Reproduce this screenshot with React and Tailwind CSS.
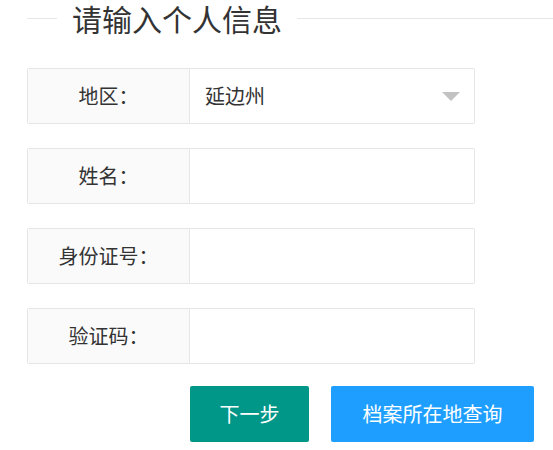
export default function App() {
  const rows = [
    { label: "地区：", value: "延边州", select: true },
    { label: "姓名：" },
    { label: "身份证号：" },
    { label: "验证码：" },
  ];
  return (
    <div
      className="w-[553px] h-[450px] overflow-hidden bg-white pl-[27px] text-[#333]"
      style={{ fontFamily: '"Noto Sans CJK SC", "Noto Sans", sans-serif' }}
    >
      {/* fieldset style heading */}
      <div className="flex items-center h-[36px]">
        <div className="w-[30px] h-px bg-[#e6e6e6]" />
        <span className="px-[15px] text-[30px] leading-[36px] whitespace-nowrap text-[#333]">请输入个人信息</span>
        <div className="flex-1 h-px bg-[#e6e6e6]" />
      </div>

      <div className="mt-[32px] flex flex-col gap-[24px] w-[448px]">
        {rows.map((r) => (
          <div
            key={r.label}
            className="flex h-[56px] border border-[#e6e6e6] rounded-[2px] overflow-hidden"
          >
            <div className="w-[162px] shrink-0 bg-[#fafafa] border-r border-[#e6e6e6] flex items-center justify-center text-[20px]">
              {r.label}
            </div>
            <div className="flex-1 flex items-center pl-[15px] pr-[14px] text-[20px]">
              <span className="flex-1">{r.value || ""}</span>
              {r.select && (
                <svg width="18" height="9" viewBox="0 0 18 9">
                  <path d="M0 0 L18 0 L9 9 Z" fill="#c2c2c2" />
                </svg>
              )}
            </div>
          </div>
        ))}
      </div>

      <div className="mt-[22px] flex gap-[22px] pl-[163px]">
        <button className="w-[119px] h-[56px] rounded-[2px] bg-[#009688] text-white text-[20px]">
          下一步
        </button>
        <button className="w-[203px] h-[56px] rounded-[2px] bg-[#1e9fff] text-white text-[20px]">
          档案所在地查询
        </button>
      </div>
    </div>
  );
}
